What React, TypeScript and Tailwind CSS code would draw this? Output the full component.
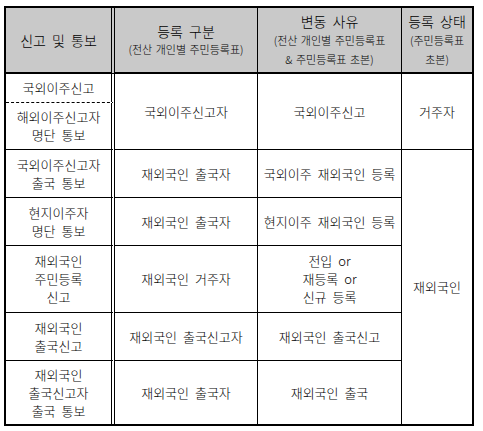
import React from 'react';

const font = { fontFamily: '"Noto Sans CJK KR", "Noto Sans", sans-serif' };

type CellProps = {
  className?: string;
  children: React.ReactNode;
};

function Cell({ className = '', children }: CellProps) {
  return (
    <div
      className={
        'flex flex-col items-center justify-center text-center text-[13px] leading-[18px] font-light text-black [word-spacing:3px] border-black ' +
        className
      }
    >
      {children}
    </div>
  );
}

export default function App() {
  return (
    <div className="min-h-[431px] w-[483px] bg-white pl-[4px] pt-[6px]" style={font}>
      <div className="grid w-[470px] grid-cols-[109px_143px_144px_70px] grid-rows-[66px_29px_47px_48px_48px_67px_48px_63px] border-2 border-black">
        {/* Header */}
        <Cell className="border-r-4 border-double border-b-2 bg-[#c9c9c9] text-[14px]">
          <span>신고 및 통보</span>
        </Cell>
        <div className="flex flex-col items-center justify-center border-b-2 border-r border-black bg-[#c9c9c9] text-center font-light text-black [word-spacing:3px]">
          <span className="text-[14px] leading-[18px]">등록 구분</span>
          <span className="text-[11px] leading-[18px] [word-spacing:1px]">(전산 개인별 주민등록표)</span>
        </div>
        <div className="flex flex-col items-center justify-center border-b-2 border-r border-black bg-[#c9c9c9] pt-[1px] text-center font-light text-black [word-spacing:3px]">
          <span className="text-[14px] leading-[19px]">변동 사유</span>
          <span className="text-[11px] leading-[19px] [word-spacing:1px]">(전산 개인별 주민등록표</span>
          <span className="text-[11px] leading-[19px] [word-spacing:1px]">&amp; 주민등록표 초본)</span>
        </div>
        <div className="flex flex-col items-center justify-center border-b-2 border-black bg-[#c9c9c9] pt-[1px] text-center font-light text-black [word-spacing:3px]">
          <span className="text-[14px] leading-[19px]">등록 상태</span>
          <span className="text-[11px] leading-[19px]">(주민등록표</span>
          <span className="text-[11px] leading-[19px]">초본)</span>
        </div>

        {/* Row 1 */}
        <Cell className="col-start-1 row-start-2 border-r-4 border-double border-b [border-bottom-style:dashed]">
          <span>국외이주신고</span>
        </Cell>
        <Cell className="col-start-1 row-start-3 border-r-4 border-double border-b [border-bottom-style:solid]">
          <span>해외이주신고자</span>
          <span>명단 통보</span>
        </Cell>
        <Cell className="col-start-2 row-span-2 row-start-2 border-r border-b">국외이주신고자</Cell>
        <Cell className="col-start-3 row-span-2 row-start-2 border-r border-b">국외이주신고</Cell>
        <Cell className="col-start-4 row-span-2 row-start-2 border-b">거주자</Cell>

        {/* Row 2 */}
        <Cell className="col-start-1 row-start-4 border-r-4 border-double border-b [border-bottom-style:solid]">
          <span>국외이주신고자</span>
          <span>출국 통보</span>
        </Cell>
        <Cell className="col-start-2 row-start-4 border-r border-b">재외국인 출국자</Cell>
        <Cell className="col-start-3 row-start-4 border-r border-b">국외이주 재외국인 등록</Cell>

        {/* Row 3 */}
        <Cell className="col-start-1 row-start-5 border-r-4 border-double border-b [border-bottom-style:solid]">
          <span>현지이주자</span>
          <span>명단 통보</span>
        </Cell>
        <Cell className="col-start-2 row-start-5 border-r border-b">재외국인 출국자</Cell>
        <Cell className="col-start-3 row-start-5 border-r border-b">현지이주 재외국인 등록</Cell>

        {/* Row 4 */}
        <Cell className="col-start-1 row-start-6 border-r-4 border-double border-b [border-bottom-style:solid]">
          <span>재외국인</span>
          <span>주민등록</span>
          <span>신고</span>
        </Cell>
        <Cell className="col-start-2 row-start-6 border-r border-b">재외국인 거주자</Cell>
        <Cell className="col-start-3 row-start-6 border-r border-b">
          <span>전입 or</span>
          <span>재등록 or</span>
          <span>신규 등록</span>
        </Cell>

        {/* Row 5 */}
        <Cell className="col-start-1 row-start-7 border-r-4 border-double border-b [border-bottom-style:solid]">
          <span>재외국인</span>
          <span>출국신고</span>
        </Cell>
        <Cell className="col-start-2 row-start-7 border-r border-b">재외국인 출국신고자</Cell>
        <Cell className="col-start-3 row-start-7 border-r border-b">재외국인 출국신고</Cell>

        {/* Row 6 */}
        <Cell className="col-start-1 row-start-8 border-r-4 border-double">
          <span>재외국인</span>
          <span>출국신고자</span>
          <span>출국 통보</span>
        </Cell>
        <Cell className="col-start-2 row-start-8 border-r">재외국인 출국자</Cell>
        <Cell className="col-start-3 row-start-8 border-r">재외국인 출국</Cell>

        {/* Status column */}
        <Cell className="col-start-4 row-span-5 row-start-4">재외국인</Cell>
      </div>
    </div>
  );
}
